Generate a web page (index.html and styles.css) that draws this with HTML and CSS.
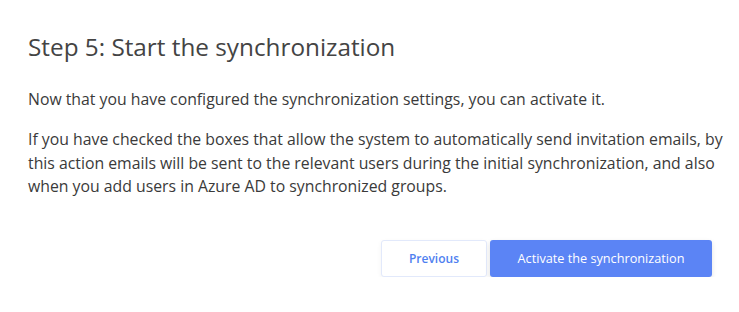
FILE: index.html
```html
<!DOCTYPE html>
<html>
<head>
<meta charset="utf-8">
<link rel="stylesheet" href="styles.css">
</head>
<body>
<div class="panel">
  <h2 class="title">Step 5: Start the synchronization</h2>
  <p class="text">Now that you have configured the synchronization settings, you can activate it.</p>
  <p class="text">If you have checked the boxes that allow the system to automatically send invitation emails, by this action emails will be sent to the relevant users during the initial synchronization, and also when you add users in Azure AD to synchronized groups.</p>
  <div class="actions">
    <button class="btn btn-secondary">Previous</button>
    <button class="btn btn-primary">Activate the synchronization</button>
  </div>
</div>
</body>
</html>
```
FILE: styles.css
```css
html, body {
  margin: 0;
  padding: 0;
  background: #ffffff;
}
body {
  font-family: "Open Sans", "Noto Sans", sans-serif;
  color: #3a3a3a;
}
.panel {
  padding: 31px 27px 0 28px;
}
.title {
  margin: 0 0 25px 0;
  font-size: 24.3px;
  font-weight: 400;
  color: #444444;
  line-height: 32px;
}
.text {
  margin: 0 -14px 16.5px 0;
  font-size: 15.8px;
  line-height: 23.5px;
  color: #3a3a3a;
}
.actions {
  display: flex;
  justify-content: flex-end;
  gap: 3px;
  margin-top: 41px;
}
.btn {
  font-family: inherit;
  height: 37px;
  border-radius: 3px;
  cursor: pointer;
}
.btn-secondary {
  width: 106px;
  font-size: 12px;
  background: #ffffff;
  border: 1px solid #e2e9fb;
  color: #4f7ff0;
  font-weight: 600;
  box-shadow: 0 2px 5px rgba(0,0,0,0.05);
}
.btn-primary {
  width: 222px;
  font-size: 12.7px;
  background: #5b84f5;
  border: none;
  color: #ffffff;
  font-weight: 400;
  box-shadow: 0 2px 5px rgba(0,0,0,0.12);
}
```
